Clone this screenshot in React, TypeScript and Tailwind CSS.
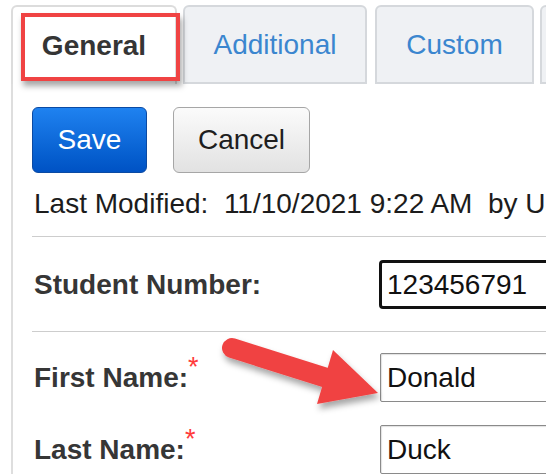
const tabs = [
  { label: "General", width: "w-[166px]", active: true },
  { label: "Additional", width: "w-[184px]", active: false },
  { label: "Custom", width: "w-[159px]", active: false },
];

function RequiredMark() {
  return <span className="relative -top-[11px] text-[27px] font-normal text-[#ff3b3b]">*</span>;
}

function Field({ label, value, required, focused }: { label: string; value: string; required?: boolean; focused?: boolean }) {
  return (
    <div className="flex h-[49px] items-center">
      <div className="w-[347px] shrink-0 pl-[2px] font-bold text-[#363636]">
        {label}
        {required && <RequiredMark />}
      </div>
      <div
        className={
          focused
            ? "flex h-[49px] w-[200px] shrink-0 items-center rounded-[4px] border-[3px] border-[#111] pl-[5px] text-[#111]"
            : "ml-px flex h-[49px] w-[200px] shrink-0 items-center rounded-[2px] border border-[#8a8a8a] pl-[6px] text-[#111] shadow-[inset_1px_1px_1px_rgba(0,0,0,0.12)]"
        }
      >
        {value}
      </div>
    </div>
  );
}

export default function App() {
  return (
    <div className="relative h-[474px] w-[546px] overflow-hidden bg-white font-['Liberation_Sans',Arial,sans-serif] text-[28px] leading-[32px]">
      {/* Tab strip */}
      <div className="flex items-end gap-[6px] pl-[11px] pt-[5px]">
        {tabs.map((t, i) => (
          <div
            key={t.label}
            className={
              (t.active
                ? "border-b-0 border-[#dcdcdc] bg-white font-bold text-[#353535] "
                : "border-[#d5d8dc] bg-[#eff1f4] text-[#3b86cf] ") +
              (i === 2 ? "ml-[2px] " : "") +
              t.width +
              " flex h-[79px] shrink-0 items-center justify-center rounded-t-[6px] border-2"
            }
          >
            {t.label}
          </div>
        ))}
        <div className="h-[79px] w-[40px] shrink-0 rounded-t-[6px] border-2 border-[#d5d8dc] bg-[#eff1f4]" />
      </div>

      {/* Tab panel */}
      <div className="ml-[11px] h-[400px] w-[600px] border-l-2 border-[#dedede] pl-[19px]">
        <div className="flex gap-[26px] pt-[23px]">
          <button className="h-[66px] w-[115px] rounded-[6px] border border-[#0b4aa3] bg-gradient-to-b from-[#1f82f0] to-[#0052c4] text-white">
            Save
          </button>
          <button className="h-[66px] w-[137px] rounded-[6px] border border-[#a6a6a6] bg-gradient-to-b from-[#fbfbfb] to-[#e2e2e2] text-[#1e1e1e]">
            Cancel
          </button>
        </div>

        <div className="mt-[15px] whitespace-pre pl-[2px] text-[#1c1c1c]">Last Modified:  11/10/2021 9:22 AM  by User</div>

        <div className="mt-[16px] h-px bg-[#cdcdcd]" />
        <div className="pb-[22px] pt-[23px]">
          <Field label="Student Number:" value="123456791" focused />
        </div>
        <div className="h-px bg-[#cdcdcd]" />

        <div className="mt-[21px] flex flex-col gap-[23px]">
          <Field label="First Name:" value="Donald" required />
          <Field label="Last Name:" value="Duck" required />
        </div>
      </div>

      {/* Callout box around the active tab */}
      <div className="absolute left-[21px] top-[13px] h-[68px] w-[159px] border-4 border-[#f04343] shadow-[2px_5px_6px_rgba(0,0,0,0.35)]" />

      {/* Callout arrow */}
      <svg className="pointer-events-none absolute left-0 top-0" width="546" height="474" viewBox="0 0 546 474">
        <defs>
          <filter id="arrowShadow" x="-20%" y="-20%" width="140%" height="160%">
            <feDropShadow dx="2" dy="5" stdDeviation="3" floodColor="#000" floodOpacity="0.35" />
          </filter>
        </defs>
        <g filter="url(#arrowShadow)" fill="#f04343">
          <path d="M232 348 L330 379" stroke="#f04343" strokeWidth="20" strokeLinecap="round" />
          <path d="M333 350 L378 393 L317 404 Z" />
        </g>
      </svg>
    </div>
  );
}
